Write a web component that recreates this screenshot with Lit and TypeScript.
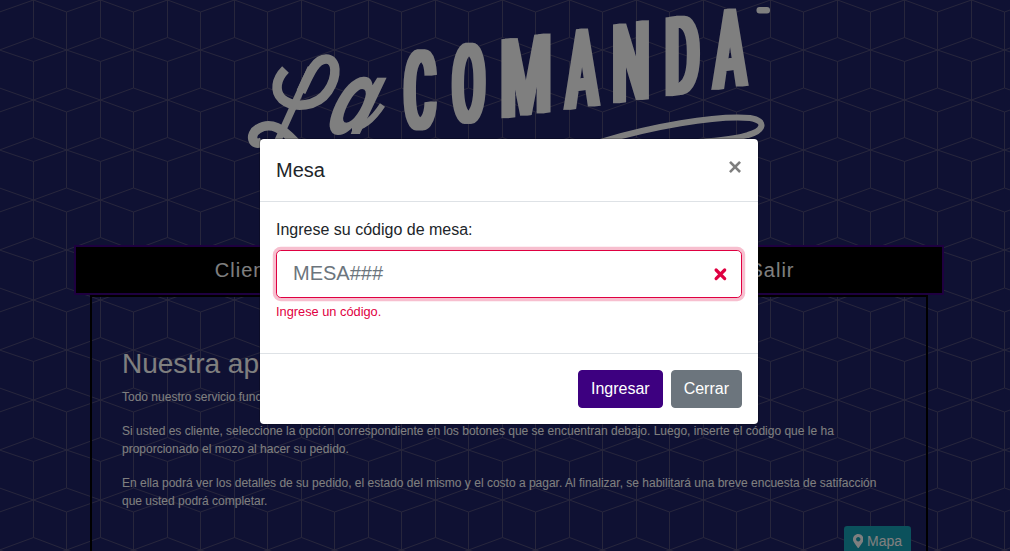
import { LitElement, html, css, svg } from "lit";
import { customElement } from "lit/decorators.js";

interface Glyph { c: string; x: number; y: number; w: number; }

@customElement("brand-logo")
class BrandLogo extends LitElement {
  static styles = css`
    :host { display: block; width: 530px; height: 245px; }
    svg { display: block; overflow: visible; }
    .caps { font: 600 111px Roboto, sans-serif; fill: #fff; }
    .script { font: italic 700 100px "Open Sans", sans-serif; fill: #fff; }
    .stem { font-weight: 600; }
    .swash { fill: none; stroke: #fff; stroke-width: 9.5; stroke-linecap: butt; }
    .fine { stroke-width: 6; }
  `;
  private glyphs: Glyph[] = [
    { c: "C", x: 404.2, y: 131.5, w: 31.5 },
    { c: "O", x: 452.5, y: 125, w: 32.5 },
    { c: "M", x: 500.5, y: 118.8, w: 51 },
    { c: "A", x: 566, y: 110, w: 32 },
    { c: "N", x: 612.5, y: 103.7, w: 37 },
    { c: "D", x: 665, y: 96.7, w: 34.5 },
    { c: "A", x: 714, y: 90, w: 32 },
  ];
  render() {
    return html`<svg width="530" height="245" viewBox="244 0 530 245">
      <defs><filter id="heavy" filterUnits="userSpaceOnUse" x="390" y="0" width="380" height="150" color-interpolation-filters="sRGB">
        <feMorphology operator="dilate" radius="3 0"/></filter></defs>
      <g filter="url(#heavy)">${this.glyphs.map((g) => svg`<text class="caps" transform="translate(${g.x} ${g.y}) skewY(-7.8)"
        textLength=${g.w} lengthAdjust="spacingAndGlyphs">${g.c}</text>`)}</g>
      <text class="script stem" transform="translate(264 158) skewX(-19) scale(.66 1.28)">L</text>
      <text class="script" transform="translate(322 134) skewX(-17) scale(.82 1.03)">a</text>
      <path class="swash" d="M285.5 69.5 C276 79 274 91 282 99 C294 109 317 107 328 91 C338 76 337 59 326 59 C315 59 309 75 301 92"/>
      <path class="swash" d="M262 142 C252 147 249 134 258 129 C271 121 283 129 295 142"/>
      <path class="swash fine" d="M352 128 C364 128 374 118 382.5 105"/>
      <path class="swash fine" d="M600 142 C650 127 715 115 750 118 C768 121 763 131 748 135 C735 139 720 140 700 142"/>
      <rect x="756.5" y="7" width="13.5" height="6.5" rx="3" fill="#fff"/>
    </svg>`;
  }
}

@customElement("table-dialog")
class TableDialog extends LitElement {
  static styles = css`
    :host { display: block; box-sizing: border-box; width: 500px; background: #fff; background-clip: padding-box;
      border: 1px solid rgba(0,0,0,.2); border-radius: 4.8px; color: #212529;
      font: 16px/24px "Liberation Sans", Arial, sans-serif; }
    * { box-sizing: border-box; }
    header { display: flex; justify-content: space-between; align-items: flex-start; padding: 16px; border-bottom: 1px solid #dee2e6; }
    h5 { margin: 0; font-size: 20px; font-weight: 500; line-height: 30px; }
    .close { border: 0; background: none; padding: 16px; margin: -16px; font: 700 24px/24px "Liberation Sans", Arial, sans-serif; color: #000; opacity: .5; text-shadow: 0 1px 0 #fff; }
    main { padding: 16px; height: 151px; }
    label { display: block; margin-bottom: 8px; }
    .field { display: flex; align-items: center; height: 48px; padding: 0 14px 0 16px; border: 1px solid #df0041; border-radius: 4.8px; box-shadow: 0 0 0 3.2px rgba(223,0,65,.25); }
    input { flex: 1; min-width: 0; border: 0; outline: 0; padding: 0 0 2px; height: 30px; font: 20px/28px "Liberation Sans", Arial, sans-serif; background: none; }
    input::placeholder { color: #6c757d; opacity: 1; }
    .field svg { display: block; }
    .error { margin-top: 4px; font-size: 12.8px; line-height: 19.2px; color: #df0041; }
    footer { display: flex; justify-content: flex-end; gap: 8px; padding: 16px; border-top: 1px solid #dee2e6; }
    .btn { height: 38px; padding: 0 12px; border: 1px solid #6c757d; border-radius: 4px; background: #6c757d; color: #fff; font: 16px/24px "Liberation Sans", Arial, sans-serif; }
    .primary { background: #3d0080; border-color: #3d0080; }
  `;
  render() {
    return html`
      <header><h5>Mesa</h5><button class="close">×</button></header>
      <main>
        <label>Ingrese su código de mesa:</label>
        <div class="field"><input placeholder="MESA###">
          <svg width="14" height="14" viewBox="0 0 14 14"><path d="M3.1 3l8.6 8.6M11.7 3l-8.6 8.6" stroke="#df0041" stroke-width="3.2" stroke-linecap="round"/></svg>
        </div>
        <div class="error">Ingrese un código.</div>
      </main>
      <footer><button class="btn primary">Ingresar</button><button class="btn">Cerrar</button></footer>`;
  }
}

@customElement("app-root")
class AppRoot extends LitElement {
  static styles = css`
    :host { display: block; position: relative; width: 100%; height: 551px; overflow: hidden; background: #1e2266;
      color: #fff; font: 12px/18px "Liberation Sans", Arial, sans-serif; }
    * { box-sizing: border-box; }
    .lattice { position: absolute; inset: 0; width: 100%; height: 100%; }
    .page { position: relative; width: 1018px; display: flex; flex-direction: column; align-items: center; }
    .nav { display: flex; justify-content: space-between; align-items: center; width: 870px; height: 50px; padding: 0 147.5px 0 138.8px;
      background: #000; border: 2px solid #3d0080; font-size: 20px; letter-spacing: 1px; }
    .panel { width: 838px; height: 300px; border: 2px solid #000; padding: 50px 15px 0 30px; }
    h3 { margin: 0 0 8px; font-size: 28px; line-height: 33px; font-weight: 500; }
    p { margin: 0 15px 16px 0; }
    .actions { display: flex; justify-content: flex-end; }
    .map { display: flex; align-items: center; gap: 3.5px; height: 31px; padding: 0 9px; border-radius: 3.2px; background: #17a2b8; font-size: 14px; line-height: 21px; }
    .map svg { position: relative; top: -1px; }
    .backdrop { position: absolute; inset: 0; background: rgba(0,0,0,.5); }
    table-dialog { position: absolute; left: 259px; top: 138px; }
  `;
  render() {
    return html`
      <svg class="lattice"><defs><pattern id="cubes" width="67" height="100" patternUnits="userSpaceOnUse">
        <path d="M33.5 0V37.5M33.5 61.5V100M66.5 12V88M-.5 50L33.5 37.5L66.5 50L33.5 61.5ZM66.5 50L67.5 49.6M66.5 50L67.5 50.4M-.5 12L33.5 0L66.5 12L67.5 11.6M-.5 88L33.5 100L66.5 88L67.5 88.4" fill="none" stroke="#4e4c78" stroke-width="1"/>
      </pattern></defs><rect width="100%" height="100%" fill="url(#cubes)"/></svg>
      <div class="page">
        <brand-logo></brand-logo>
        <nav class="nav"><span>Cliente</span><span>Salir</span></nav>
        <section class="panel">
          <h3>Nuestra aplicación</h3>
          <p>Todo nuestro servicio funciona mediante esta aplicación.</p>
          <p>Si usted es cliente, seleccione la opción correspondiente en los botones que se encuentran debajo. Luego, inserte el código que le ha proporcionado el mozo al hacer su pedido.</p>
          <p>En ella podrá ver los detalles de su pedido, el estado del mismo y el costo a pagar. Al finalizar, se habilitará una breve encuesta de satifacción que usted podrá completar.</p>
          <div class="actions"><div class="map">
            <svg width="10.5" height="14" viewBox="0 0 384 512"><path fill="#fff" d="M172.268 501.67C26.97 291.031 0 269.413 0 192 0 85.961 85.961 0 192 0s192 85.961 192 192c0 77.413-26.97 99.031-172.268 309.67-9.535 13.774-29.93 13.773-39.464 0zM192 272c44.183 0 80-35.817 80-80s-35.817-80-80-80-80 35.817-80 80 35.817 80 80 80z"/></svg>
            <span>Mapa</span></div></div>
        </section>
      </div>
      <div class="backdrop"></div>
      <table-dialog></table-dialog>`;
  }
}
